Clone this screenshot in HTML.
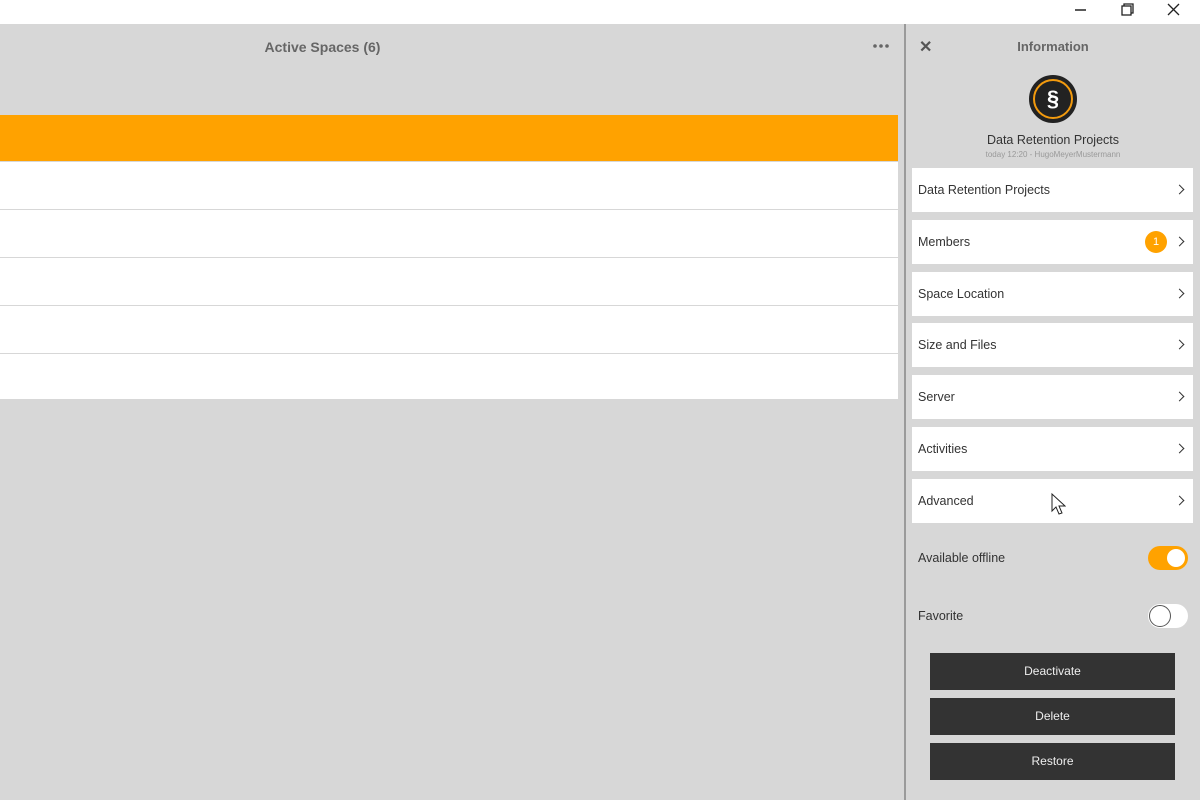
<!DOCTYPE html>
<html><head><style>
*{margin:0;padding:0;box-sizing:border-box}
body{width:1200px;height:800px;background:#d7d7d7;font-family:"Liberation Sans",sans-serif;position:relative;overflow:hidden;color:#333}
.abs{position:absolute}
.tb{left:0;top:0;width:1200px;height:24px;background:#fff}
.row{left:0;width:898px;height:47px;background:#fff}
.card{left:912px;width:281px;height:44px;background:#fff;font-size:12.5px;color:#333;line-height:44px;padding-left:6px}
.chev{position:absolute;right:10px;top:18px;width:7px;height:7px;border-right:1.8px solid #333;border-top:1.8px solid #333;transform:rotate(45deg)}
.btn{left:930px;width:245px;height:37px;background:#333;color:#eee;font-size:12px;text-align:center;line-height:37px}
</style></head><body>
<div class="abs tb"></div>
<svg class="abs" style="left:1070px;top:0" width="130" height="24">
<line x1="5" y1="10" x2="16" y2="10" stroke="#222" stroke-width="1.5"/>
<rect x="52" y="6" width="9" height="9" fill="none" stroke="#222" stroke-width="1.3"/>
<path d="M54 6V4h9v9h-2" fill="none" stroke="#222" stroke-width="1.3"/>
<path d="M98 4l11 11M109 4L98 15" stroke="#222" stroke-width="1.3"/>
</svg>
<div class="abs" style="left:0;top:39px;width:645px;text-align:center;font-size:14px;font-weight:bold;color:#666">Active Spaces (6)</div>
<svg class="abs" style="left:872px;top:42px" width="18" height="8"><circle cx="3" cy="4" r="1.8" fill="#666"/><circle cx="9" cy="4" r="1.8" fill="#666"/><circle cx="15" cy="4" r="1.8" fill="#666"/></svg>
<div class="abs" style="left:0;top:115px;width:898px;height:46px;background:#ffa200"></div>
<div class="abs row" style="top:162px"></div>
<div class="abs row" style="top:210px"></div>
<div class="abs row" style="top:258px"></div>
<div class="abs row" style="top:306px"></div>
<div class="abs row" style="top:354px;height:45px"></div>
<div class="abs" style="left:904px;top:24px;width:2px;height:776px;background:#9a9a9a"></div>
<div class="abs" style="left:919px;top:37px;font-size:16px;font-weight:bold;color:#555">✕</div>
<div class="abs" style="left:906px;top:39px;width:294px;text-align:center;font-size:13px;font-weight:bold;color:#666">Information</div>
<div class="abs" style="left:1029px;top:75px;width:48px;height:48px;border-radius:50%;background:#222;border:2px solid #222"><div style="position:absolute;left:2px;top:2px;width:40px;height:40px;border-radius:50%;border:2px solid #f29a0e;color:#fff;font-size:22px;font-weight:bold;text-align:center;line-height:36px">§</div></div>
<div class="abs" style="left:906px;top:133px;width:294px;text-align:center;font-size:12.5px;color:#333">Data Retention Projects</div>
<div class="abs" style="left:906px;top:150px;width:294px;text-align:center;font-size:8px;color:#999">today 12:20 - HugoMeyerMustermann</div>
<div class="abs card" style="top:168px">Data Retention Projects<span class="chev"></span></div>
<div class="abs card" style="top:220px">Members<span style="position:absolute;left:233px;top:11px;width:22px;height:22px;border-radius:50%;background:#ffa200;color:#fff;font-size:11px;line-height:22px;text-align:center">1</span><span class="chev"></span></div>
<div class="abs card" style="top:272px">Space Location<span class="chev"></span></div>
<div class="abs card" style="top:323px">Size and Files<span class="chev"></span></div>
<div class="abs card" style="top:375px">Server<span class="chev"></span></div>
<div class="abs card" style="top:427px">Activities<span class="chev"></span></div>
<div class="abs card" style="top:479px">Advanced<span class="chev"></span></div>
<div class="abs" style="left:918px;top:551px;font-size:12.5px">Available offline</div>
<div class="abs" style="left:1148px;top:546px;width:40px;height:24px;border-radius:12px;background:#ffa200"><div style="position:absolute;right:3px;top:3px;width:18px;height:18px;border-radius:50%;background:#fff"></div></div>
<div class="abs" style="left:918px;top:609px;font-size:12.5px">Favorite</div>
<div class="abs" style="left:1148px;top:604px;width:40px;height:24px;border-radius:12px;background:#fff"><div style="position:absolute;left:1px;top:1px;width:22px;height:22px;border-radius:50%;border:1.5px solid #555;background:#fff"></div></div>
<div class="abs btn" style="top:653px">Deactivate</div>
<div class="abs btn" style="top:698px">Delete</div>
<div class="abs btn" style="top:743px">Restore</div>
<svg class="abs" style="left:1050px;top:492px" width="16" height="24"><path d="M2 2v17l4-4 3 7 3-1-3-7h6z" fill="#fff" stroke="#222" stroke-width="1"/></svg>
</body></html>
